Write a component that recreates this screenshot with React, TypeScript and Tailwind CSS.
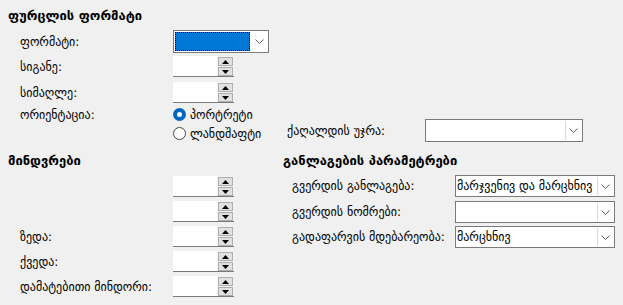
import React from "react";

function Tri({ up }: { up?: boolean }) {
  return (
    <svg width="7" height="4" viewBox="0 0 7 4" className="block">
      {up ? <polygon points="0,4 7,4 3.5,0" fill="#000" /> : <polygon points="0,0 7,0 3.5,4" fill="#000" />}
    </svg>
  );
}

function Spinner() {
  return (
    <div className="flex h-[21px] w-[61px] border-b border-[#7a7a7a] bg-[#f4f4f4]">
      <div className="w-[44px] bg-white" />
      <div className="flex flex-col gap-[1px] pl-[1px] pt-[1px]">
        <div className="flex h-[9px] w-[15px] items-center justify-center border border-[#adadad] bg-[#e1e1e1]">
          <Tri up />
        </div>
        <div className="flex h-[9px] w-[15px] items-center justify-center border border-[#adadad] bg-[#e1e1e1]">
          <Tri />
        </div>
      </div>
    </div>
  );
}

function Chevron() {
  return (
    <svg width="9" height="5" viewBox="0 0 9 5" className="block">
      <polyline points="0.5,0.5 4.5,4.5 8.5,0.5" fill="none" stroke="#606060" strokeWidth="1" />
    </svg>
  );
}

function Select({ value, w, h }: { value?: string; w: string; h: string }) {
  return (
    <div className={`flex ${w} ${h} border border-[#7a7a7a] bg-white`}>
      <div className="flex flex-1 items-center overflow-hidden whitespace-nowrap pl-[1px]">{value}</div>
      <div className="my-[1px] mr-[1px] flex w-[16px] items-center justify-center border-l border-[#d9d9d9]">
        <Chevron />
      </div>
    </div>
  );
}

function Radio({ checked }: { checked?: boolean }) {
  return checked ? (
    <div className="flex h-[13px] w-[13px] items-center justify-center rounded-full bg-[#0067c0]">
      <div className="h-[5px] w-[5px] rounded-full bg-white" />
    </div>
  ) : (
    <div className="h-[13px] w-[13px] rounded-full border border-[#444444] bg-white" />
  );
}

export default function App() {
  return (
    <div className="h-[305px] w-[623px] overflow-hidden bg-[#f0f0f0] font-['DejaVu_Sans',sans-serif] text-[12px] leading-[16px] text-black">
      <div className="pl-[8px] pt-[8px]">
        <div className="h-[16px] text-[13px] font-bold">ფურცლის ფორმატი</div>
        <div className="mt-[6px] flex h-[23px] items-center pl-[12px]">
          <div className="w-[153px]">ფორმატი:</div>
          <div className="flex h-[23px] w-[96px] border border-[#7a7a7a] bg-white">
            <div className="m-[1px] flex-1 border border-dotted border-black bg-[#0078d7]" />
            <div className="my-[1px] mr-[1px] flex w-[16px] items-center justify-center">
              <Chevron />
            </div>
          </div>
        </div>
        <div className="mt-[3px] flex h-[21px] items-center pl-[12px]">
          <div className="w-[153px]">სიგანე:</div>
          <Spinner />
        </div>
        <div className="mt-[5px] flex h-[21px] items-center pl-[12px]">
          <div className="w-[153px]">სიმაღლე:</div>
          <Spinner />
        </div>
        <div className="mt-[2px] flex pl-[12px]">
          <div className="flex h-[19px] w-[153px] items-center">ორიენტაცია:</div>
          <div className="flex w-[114px] flex-col">
            <div className="flex h-[19px] items-center gap-[4px]">
              <Radio checked />
              <span>პორტრეტი</span>
            </div>
            <div className="flex h-[19px] items-center gap-[4px]">
              <Radio />
              <span>ლანდშაფტი</span>
            </div>
          </div>
          <div className="flex items-center pt-[13px]">
            <div className="w-[138px]">ქაღალდის უჯრა:</div>
            <Select w="w-[158px]" h="h-[23px]" />
          </div>
        </div>
        <div className="mt-[10px] flex">
          <div className="w-[275px]">
            <div className="h-[16px] text-[13px] font-bold">მინდვრები</div>
            <div className="mt-[7px] flex h-[21px] items-center pl-[12px]">
              <div className="w-[153px]"></div>
              <Spinner />
            </div>
            <div className="mt-[4px] flex h-[21px] items-center pl-[12px]">
              <div className="w-[153px]"></div>
              <Spinner />
            </div>
            <div className="mt-[4px] flex h-[21px] items-center pl-[12px]">
              <div className="w-[153px]">ზედა:</div>
              <Spinner />
            </div>
            <div className="mt-[4px] flex h-[21px] items-center pl-[12px]">
              <div className="w-[153px]">ქვედა:</div>
              <Spinner />
            </div>
            <div className="mt-[4px] flex h-[21px] items-center pl-[12px]">
              <div className="w-[153px]">დამატებითი მინდორი:</div>
              <Spinner />
            </div>
          </div>
          <div>
            <div className="h-[16px] text-[13px] font-bold">განლაგების პარამეტრები</div>
            <div className="mt-[6px] flex items-center pl-[9px]">
              <div className="w-[163px]">გვერდის განლაგება:</div>
              <Select w="w-[160px]" h="h-[22px]" value="მარჯვენივ და მარცხნივ" />
            </div>
            <div className="mt-[4px] flex items-center pl-[9px]">
              <div className="w-[163px]">გვერდის ნომრები:</div>
              <Select w="w-[160px]" h="h-[22px]" />
            </div>
            <div className="mt-[3px] flex items-center pl-[9px]">
              <div className="w-[163px]">გადაფარვის მდებარეობა:</div>
              <Select w="w-[160px]" h="h-[22px]" value="მარცხნივ" />
            </div>
          </div>
        </div>
      </div>
    </div>
  );
}
